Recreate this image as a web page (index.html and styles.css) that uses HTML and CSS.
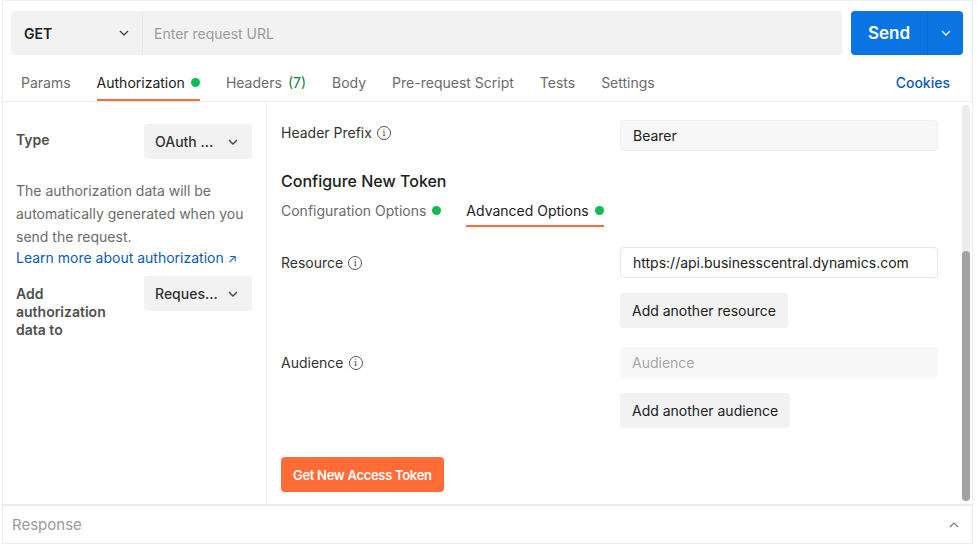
FILE: index.html
```html
<!DOCTYPE html>
<html lang="en">
<head>
    <meta charset="UTF-8">
    <title>Authorization</title>
    <link rel="stylesheet" href="styles.css">
</head>
<body>
    <div class="app">
        <div class="url-bar">
            <div class="url-group">
                <div class="method">GET
                    <svg class="chev" width="12" height="12" viewBox="0 0 12 12"><path d="M2 4l4 4 4-4" fill="none" stroke="#444" stroke-width="1.3"/></svg>
                </div>
                <div class="url-input">Enter request URL</div>
            </div>
            <div class="send-group">
                <div class="send">Send</div>
                <div class="send-arrow">
                    <svg width="12" height="12" viewBox="0 0 12 12"><path d="M2 4l4 4 4-4" fill="none" stroke="#fff" stroke-width="1.4"/></svg>
                </div>
            </div>
        </div>

        <div class="tabs">
            <div class="tab">Params</div>
            <div class="tab active">Authorization <span class="dot"></span></div>
            <div class="tab">Headers <span class="count">(7)</span></div>
            <div class="tab">Body</div>
            <div class="tab">Pre-request Script</div>
            <div class="tab">Tests</div>
            <div class="tab">Settings</div>
            <div class="tab cookies">Cookies</div>
        </div>

        <div class="main">
            <div class="left">
                <div class="row">
                    <div class="label">Type</div>
                    <div class="select">OAuth ...
                        <svg class="chev" width="12" height="12" viewBox="0 0 12 12"><path d="M2 4l4 4 4-4" fill="none" stroke="#444" stroke-width="1.3"/></svg>
                    </div>
                </div>
                <p class="desc">The authorization data will be automatically generated when you send the request.</p>
                <div class="learn">Learn more about authorization <span class="arrow">&#8599;</span></div>
                <div class="row add-row">
                    <div class="label">Add authorization data to</div>
                    <div class="select">Reques...
                        <svg class="chev" width="12" height="12" viewBox="0 0 12 12"><path d="M2 4l4 4 4-4" fill="none" stroke="#444" stroke-width="1.3"/></svg>
                    </div>
                </div>
            </div>

            <div class="right">
                <div class="field prefix">
                    <div class="flabel">Header Prefix <span class="info">i</span></div>
                    <div class="input filled">Bearer</div>
                </div>

                <div class="heading">Configure New Token</div>
                <div class="subtabs">
                    <div class="subtab">Configuration Options <span class="dot"></span></div>
                    <div class="subtab active">Advanced Options <span class="dot"></span></div>
                </div>

                <div class="field resource">
                    <div class="flabel">Resource <span class="info">i</span></div>
                    <div class="stack">
                        <div class="input white">https://api.businesscentral.dynamics.com</div>
                        <div class="btn-grey">Add another resource</div>
                    </div>
                </div>

                <div class="field audience">
                    <div class="flabel">Audience <span class="info">i</span></div>
                    <div class="stack">
                        <div class="input placeholder">Audience</div>
                        <div class="btn-grey">Add another audience</div>
                    </div>
                </div>

                <div class="token-btn">Get New Access Token</div>
            </div>

            <div class="scrollbar"><div class="thumb"></div></div>
        </div>

        <div class="response">
            <span>Response</span>
            <svg width="12" height="12" viewBox="0 0 12 12"><path d="M2 8l4-4 4 4" fill="none" stroke="#777" stroke-width="1.2"/></svg>
        </div>
    </div>
</body>
</html>
```

FILE: styles.css
```css
body {
    margin: 0;
    font-family: Inter, "Noto Sans", Arial, sans-serif;
    background-color: white;
    color: #212121;
}
.app {
    width: 969px;
    height: 543px;
    margin-left: 2px;
    border-top: 1px solid #ededed;
    border-left: 1px solid #ededed;
    border-right: 1px solid #ededed;
    display: flex;
    flex-direction: column;
}
.url-bar {
    display: flex;
    padding: 10px 9px 0 8px;
    gap: 9px;
}
.url-group {
    display: flex;
    flex: 1;
    height: 44px;
    background-color: #f2f2f2;
    border-radius: 4px;
}
.method {
    width: 132px;
    box-sizing: border-box;
    padding: 0 12px 0 13px;
    display: flex;
    align-items: center;
    justify-content: space-between;
    font-size: 14px;
    font-weight: 600;
    border-right: 1px solid #e8e8e8;
}
.url-input {
    display: flex;
    align-items: center;
    padding-left: 11px;
    font-size: 14px;
    color: #9b9b9b;
}
.send-group {
    width: 112px;
    height: 44px;
    background-color: #0a75e2;
    border-radius: 4px;
    display: flex;
    color: white;
}
.send {
    width: 76px;
    display: flex;
    align-items: center;
    justify-content: center;
    font-size: 17px;
    font-weight: 600;
    border-right: 1px solid #0a6acd;
}
.send-arrow {
    flex: 1;
    display: flex;
    align-items: center;
    justify-content: center;
}
.tabs {
    display: flex;
    height: 46px;
    padding: 0 22px 0 18px;
    gap: 26px;
    border-bottom: 1px solid #ededed;
    font-size: 14px;
}
.tab {
    color: #6b6b6b;
    display: flex;
    align-items: flex-end;
    gap: 6px;
    box-sizing: border-box;
    padding-bottom: 10px;
}
.tab .dot {
    margin-bottom: 4px;
}
.tab.active {
    color: #212121;
    border-bottom: 2px solid #ff6c37;
    padding-bottom: 8px;
}
.count {
    color: #0b8043;
}
.dot {
    display: inline-block;
    width: 9px;
    height: 9px;
    border-radius: 50%;
    background-color: #0cbb52;
}
.tab.cookies {
    margin-left: auto;
    color: #0b5cad;
    font-weight: 500;
}
.main {
    display: flex;
    flex: 1;
    min-height: 0;
    border-bottom: 1px solid #ececec;
}
.left {
    width: 264px;
    border-right: 1px solid #ededed;
    padding: 22px 14px 0 13px;
    box-sizing: border-box;
    font-size: 14px;
}
.row {
    display: flex;
    justify-content: space-between;
    align-items: flex-start;
}
.label {
    font-weight: 600;
    color: #505050;
    padding-top: 7px;
    width: 100px;
    line-height: 18px;
}
.select {
    width: 108px;
    height: 35px;
    box-sizing: border-box;
    background-color: #f2f2f2;
    border-radius: 4px;
    display: flex;
    align-items: center;
    justify-content: space-between;
    padding: 0 13px 0 11px;
    color: #333;
    font-weight: 500;
}
.desc {
    margin: 20px 0 0 0;
    line-height: 23px;
    color: #6b6b6b;
}
.learn {
    color: #0b5cad;
    line-height: 20px;
}
.arrow {
    font-size: 12px;
}
.add-row {
    margin-top: 7px;
}
.add-row .label {
    padding-top: 9px;
}
.right {
    flex: 1;
    padding: 18px 24px 0 14px;
    font-size: 14px;
}
.field {
    display: flex;
    justify-content: space-between;
}
.flabel {
    display: flex;
    align-items: center;
    gap: 5px;
    height: 31px;
    color: #333;
}
.prefix .flabel {
    height: 25px;
}
.info {
    width: 12px;
    height: 12px;
    border: 1.2px solid #555;
    border-radius: 50%;
    font-size: 9px;
    line-height: 12px;
    text-align: center;
    font-family: "DejaVu Serif", serif;
    color: #444;
}
.input {
    width: 318px;
    height: 31px;
    box-sizing: border-box;
    border-radius: 4px;
    display: flex;
    align-items: center;
    padding-left: 12px;
}
.filled {
    background-color: #f7f7f7;
    border: 1px solid #f0f0f0;
    color: #212121;
}
.white {
    background-color: white;
    border: 1px solid #e6e6e6;
    color: #212121;
}
.placeholder {
    background-color: #f7f7f7;
    color: #a6a6a6;
}
.heading {
    margin-top: 20px;
    font-size: 16px;
    font-weight: 500;
    color: #212121;
}
.subtabs {
    display: flex;
    gap: 25px;
    margin-top: 5px;
}
.subtab {
    display: flex;
    align-items: center;
    gap: 6px;
    height: 31px;
    box-sizing: border-box;
    color: #6b6b6b;
    padding-bottom: 3px;
}
.subtab.active {
    color: #212121;
    border-bottom: 2px solid #ff6c37;
    padding-bottom: 1px;
}
.resource {
    margin-top: 20px;
}
.audience {
    margin-top: 19px;
}
.stack {
    display: flex;
    flex-direction: column;
    align-items: flex-start;
    gap: 15px;
}
.btn-grey {
    height: 35px;
    padding: 0 12px;
    display: flex;
    align-items: center;
    background-color: #f2f2f2;
    border-radius: 4px;
    color: #212121;
}
.token-btn {
    display: inline-flex;
    align-items: center;
    margin-top: 29px;
    height: 35px;
    padding: 0 12px;
    background-color: #ff6c37;
    color: white;
    font-size: 13px;
    font-weight: 600;
    border-radius: 4px;
    letter-spacing: -0.3px;
}
.scrollbar {
    width: 8px;
    margin: 3px 2px 3px 0;
    background-color: #ececec;
    border-radius: 4px;
    display: flex;
    flex-direction: column;
    justify-content: flex-end;
}
.thumb {
    height: 250px;
    background-color: #a3a3a3;
    border-radius: 4px;
}
.response {
    height: 37px;
    display: flex;
    align-items: center;
    justify-content: space-between;
    padding: 0 12px 0 9px;
    font-size: 15px;
    color: #9a9a9a;
    border-top: 1px solid #ececec;
    border-bottom: 1px solid #ececec;
}
```
